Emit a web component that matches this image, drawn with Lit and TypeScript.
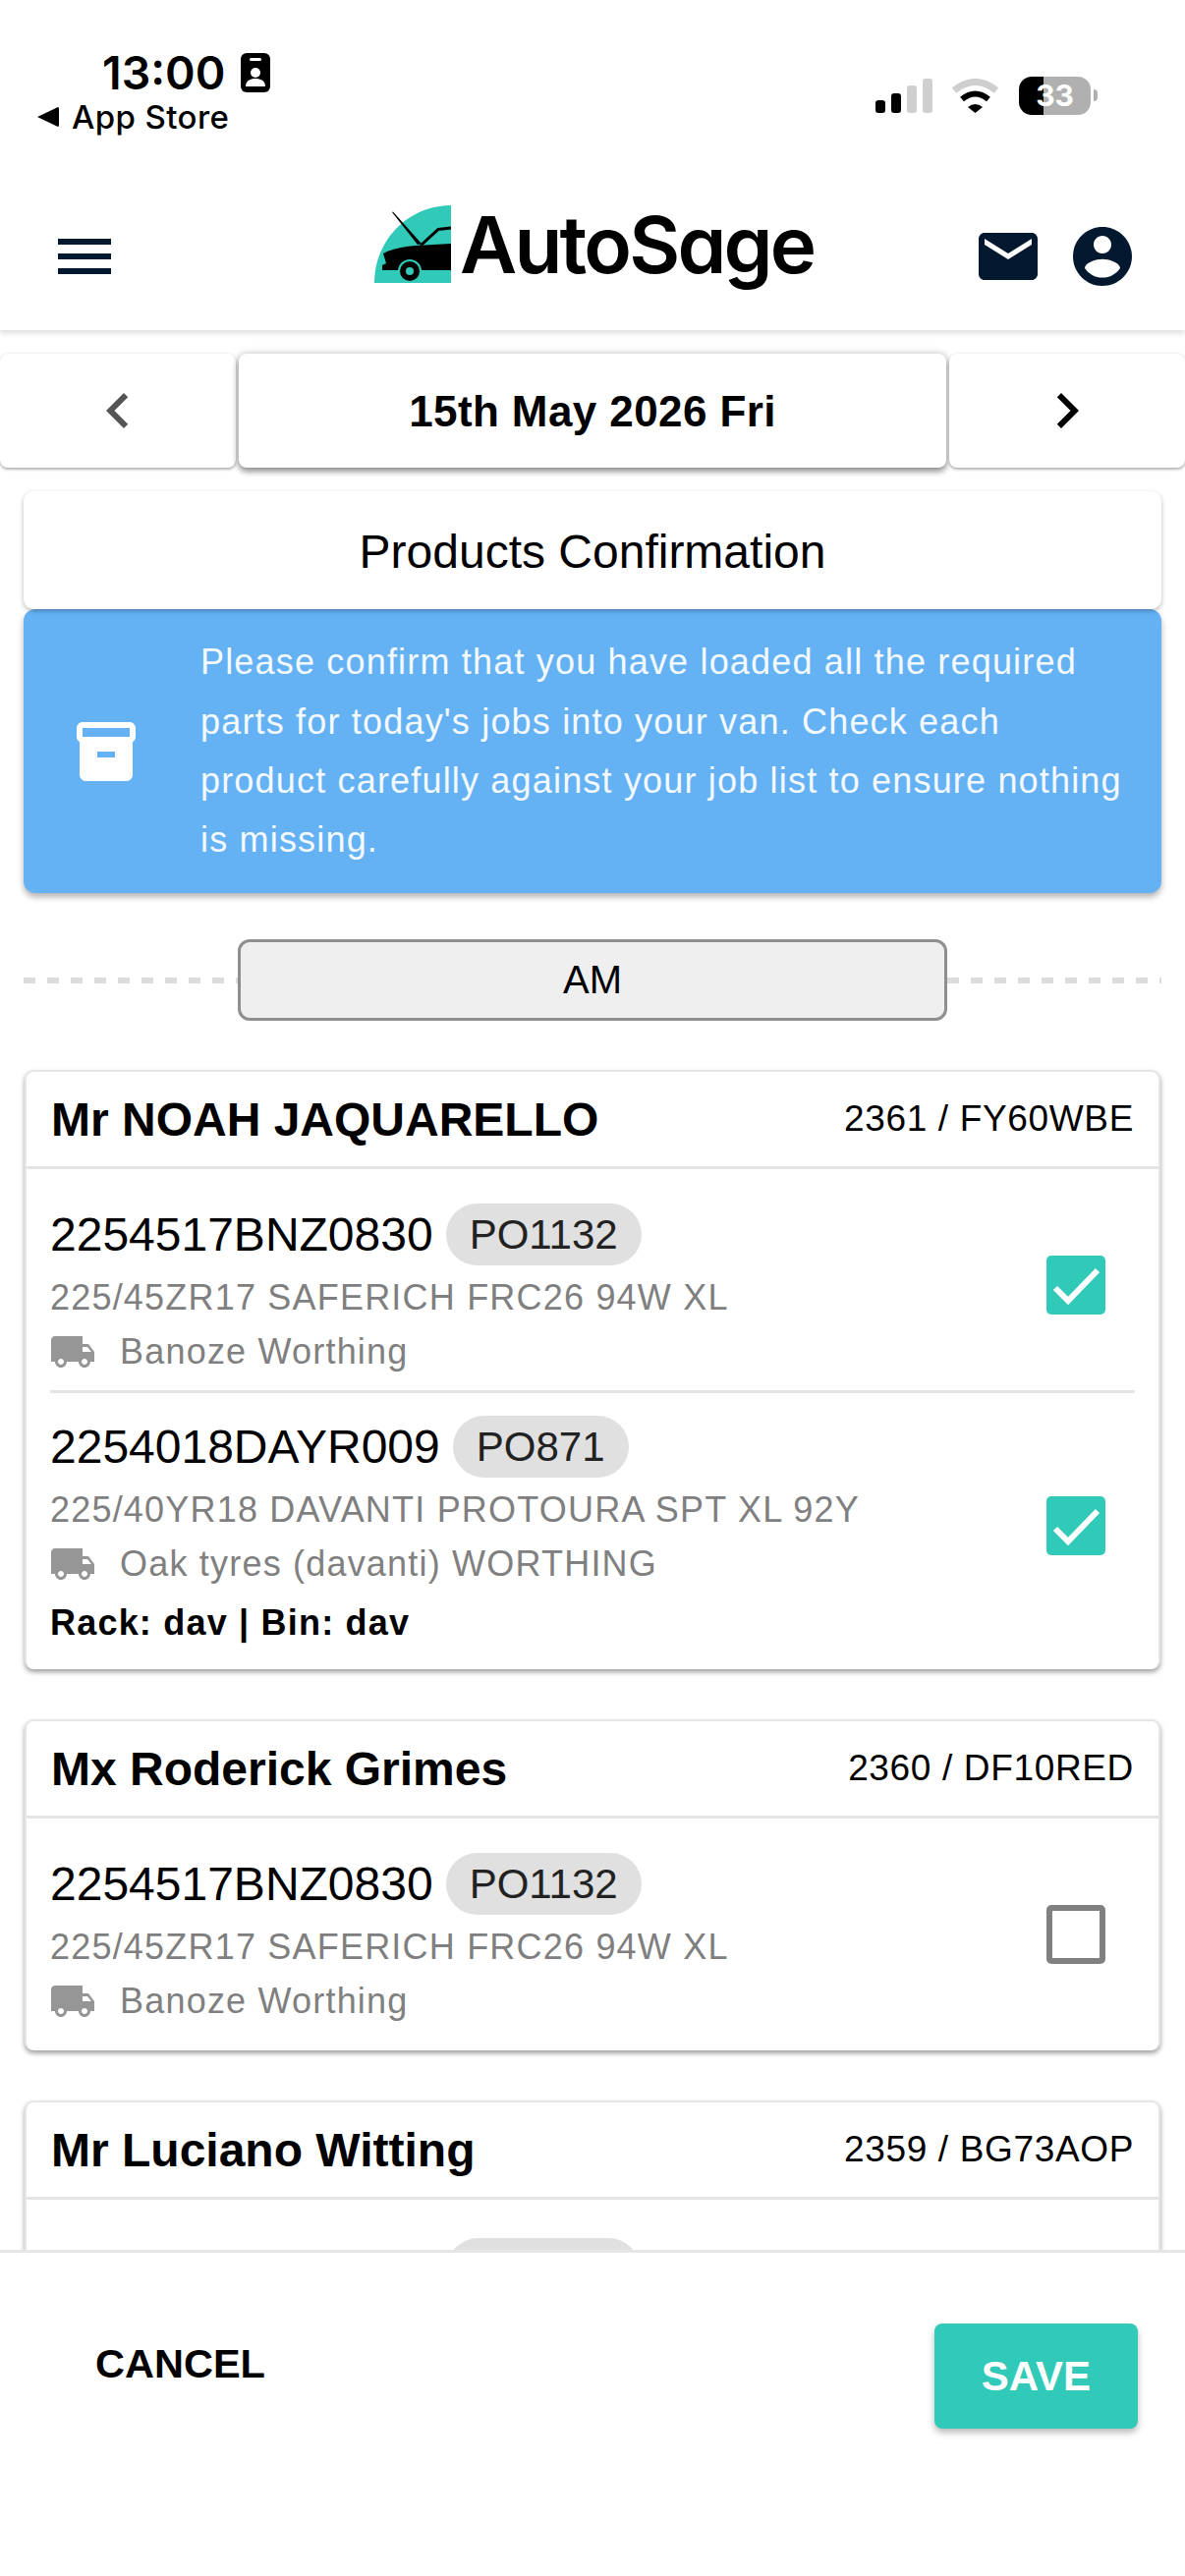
import { LitElement, html, css } from "lit";
import { customElement } from "lit/decorators.js";

const truck = "M20 8h-3V4H3c-1.1 0-2 .9-2 2v11h2c0 1.66 1.34 3 3 3s3-1.34 3-3h6c0 1.66 1.34 3 3 3s3-1.34 3-3h2v-5zM6 18.5c-.83 0-1.5-.67-1.5-1.5s.67-1.5 1.5-1.5 1.5.67 1.5 1.5-.67 1.5-1.5 1.5zm13.5-9l1.96 2.5H17V9.5h2.5zm-1.5 9c-.83 0-1.5-.67-1.5-1.5s.67-1.5 1.5-1.5 1.5.67 1.5 1.5-.67 1.5-1.5 1.5z";

const icon = (d: string, cls: string) => html`<svg class=${cls} viewBox="0 0 24 24"><path d=${d} fill="currentColor"></path></svg>`;

interface Item { part: string; po: string; desc: string; supplier: string; rack?: string; checked: boolean; }
interface Job { name: string; ref: string; items: Item[]; }

const jobs: Job[] = [
  { name: "Mr NOAH JAQUARELLO", ref: "2361 / FY60WBE", items: [
    { part: "2254517BNZ0830", po: "PO1132", desc: "225/45ZR17 SAFERICH FRC26 94W XL", supplier: "Banoze Worthing", checked: true },
    { part: "2254018DAYR009", po: "PO871", desc: "225/40YR18 DAVANTI PROTOURA SPT XL 92Y", supplier: "Oak tyres (davanti) WORTHING", rack: "Rack: dav | Bin: dav", checked: true },
  ]},
  { name: "Mx Roderick Grimes", ref: "2360 / DF10RED", items: [
    { part: "2254517BNZ0830", po: "PO1132", desc: "225/45ZR17 SAFERICH FRC26 94W XL", supplier: "Banoze Worthing", checked: false },
  ]},
  { name: "Mr Luciano Witting", ref: "2359 / BG73AOP", items: [] },
];

@customElement("app-root")
export class AppRoot extends LitElement {
  static styles = css`
    :host { display: block; width: 1206px; height: 2622px; background: #fff; font-family: "Liberation Sans", Arial, sans-serif; color: #000; overflow: hidden; }
    * { box-sizing: border-box; }
    svg { display: block; flex: none; }
    .page { display: flex; flex-direction: column; height: 2622px; }

    .header { height: 336px; flex: none; background: #fff; box-shadow: 0 3px 6px rgba(0,0,0,.14); position: relative; z-index: 2; display: flex; flex-direction: column; }
    .status { height: 186px; display: flex; justify-content: space-between; }
    .status-left { display: flex; flex-direction: column; }
    .time-row { display: flex; align-items: center; gap: 16px; padding: 54px 0 0 104px; height: 94px; }
    .time { font-family: Inter, sans-serif; font-weight: 600; font-size: 46.500px; line-height: 40px; }
    .back-row { display: flex; align-items: center; gap: 13px; padding: 6px 0 0 38px; }
    .back-tri { width: 22px; height: 20px; }
    .back { font-family: Inter, sans-serif; font-weight: 500; font-size: 33px; line-height: 38px; letter-spacing: .4px; }
    .status-right { display: flex; align-items: flex-start; padding: 78px 89px 0 0; }
    .signal { display: flex; align-items: flex-end; gap: 6px; height: 35px; margin-top: 2px; margin-left: 2px; }
    .signal i { display: block; width: 10px; border-radius: 3px; background: #000; }
    .signal i.s1 { height: 13px; }
    .signal i.s2 { height: 20px; }
    .signal i.s3 { height: 28px; background: #cfcfcf; }
    .signal i.s4 { height: 35px; background: #cfcfcf; }
    .wifi { width: 49px; height: 35px; margin: 2px 0 0 19px; }
    .battery { width: 73px; height: 39px; margin-left: 20px; border-radius: 13px; background: linear-gradient(90deg, #000 0 25px, #b0b0b0 25px); color: #fff; font-family: Inter, sans-serif; font-weight: 700; font-size: 30px; line-height: 39px; text-align: center; }
    .nub { width: 4px; height: 12px; margin: 13px 0 0 3px; background: #b0b0b0; border-radius: 0 6px 6px 0; }

    .toolbar { height: 150px; display: flex; align-items: center; padding: 0 48px 0 50px; color: #02182f; }
    .i72 { width: 72px; height: 72px; }
    .logo { display: flex; align-items: flex-start; margin: 0 0 26px 259px; gap: 9px; }
    .logo-mark { width: 78px; height: 79px; }
    .logo-text { font-family: Inter, sans-serif; font-feature-settings: "cv11" 1; font-weight: 600; font-size: 80px; line-height: 79px; letter-spacing: -2.8px; color: #000; }
    .toolbar-right { margin-left: auto; display: flex; gap: 24px; }

    .content { flex: 1; min-height: 0; overflow: hidden; }
    .date-nav { display: grid; grid-template-columns: 240px 1fr 240px; gap: 3px; margin-top: 24px; height: 116px; }
    .date-btn { background: #fff; border-radius: 8px; display: flex; align-items: center; justify-content: center; box-shadow: 0 2px 3px rgba(0,0,0,.28), 0 0 3px rgba(0,0,0,.1); }
    .date-btn.mid { padding-top: 2px; font-weight: 700; font-size: 44px; letter-spacing: .4px; box-shadow: 0 4px 6px rgba(0,0,0,.38), 0 0 8px rgba(0,0,0,.22); }
    .date-btn.prev { color: #555; }
    .title-card { margin: 24px 24px 0; height: 120px; padding-top: 2px; background: #fff; border-radius: 10px; box-shadow: 0 2px 5px rgba(0,0,0,.28); display: flex; align-items: center; justify-content: center; font-size: 48px; position: relative; z-index: 1; }
    .alert { margin: 0 24px; height: 289px; background: #64b2f4; border-radius: 12px; box-shadow: 0 4px 6px rgba(0,0,0,.3); display: flex; align-items: center; color: #fff; }
    .alert-icon { width: 72px; height: 72px; margin-left: 48px; }
    .alert-text { margin: 1px 0 0 60px; font-size: 36px; line-height: 60.3px; letter-spacing: 1.18px; color: #f4f9ff; width: 950px; }

    .section { display: grid; grid-template-columns: 218px 1fr 218px; align-items: center; margin: 47px 24px 0; }
    .dash { height: 6px; background: repeating-linear-gradient(90deg, #dcdcdc 0 12px, transparent 12px 24px); }
    .am { height: 83px; background: #efefef; border: 3px solid #8f8f8f; border-radius: 12px; display: flex; align-items: center; justify-content: center; font-size: 40px; }

    .cards { display: flex; flex-direction: column; gap: 51px; margin: 50px 25px 0; }
    .card { background: #fff; border: 2px solid #e6e6e6; border-bottom: none; border-radius: 9px; box-shadow: 0 3px 5px rgba(0,0,0,.38); }
    .card-head { height: 99px; padding: 0 25px; display: flex; align-items: center; justify-content: space-between; border-bottom: 3px solid #e4e4e4; }
    .name { font-weight: 700; font-size: 48px; }
    .ref { font-size: 37px; letter-spacing: .65px; }
    .row { margin: 0 24px; padding: 35px 0 14px; display: flex; align-items: center; justify-content: space-between; border-bottom: 3px solid #e4e4e4; }
    .row + .row { padding-top: 23px; }
    .row:last-child { border-bottom: none; padding-bottom: 25px; }
    .row-main { display: flex; flex-direction: column; }
    .part-line { display: flex; align-items: center; gap: 13px; height: 63px; }
    .part { font-size: 48px; }
    .pill { height: 63px; padding: 0 24px; border-radius: 32px; background: #e0e0e0; font-size: 42px; color: #222; display: flex; align-items: center; }
    .desc { margin-top: 13px; font-size: 36px; line-height: 40px; letter-spacing: 1.2px; color: #7f7f7f; height: 40px; }
    .supplier { margin-top: 13px; display: flex; align-items: center; gap: 24px; height: 44px; font-size: 36px; letter-spacing: 1.2px; color: #808080; white-space: nowrap; }
    .truck { width: 48px; height: 48px; color: #969696; margin-left: -1px; }
    .rack { margin-top: 16px; font-weight: 700; font-size: 36px; line-height: 44px; letter-spacing: 1.2px; }
    .supplier-end { height: 3px; }
    .check { width: 60px; height: 60px; margin: 0 30px 10px 0; border-radius: 5px; flex: none; }
    .check.on { background: #31c9b8; }
    .check.off { border: 6px solid #808080; }
    .peek { height: 240px; padding: 39px 0 0 428px; }
    .peek-pill { width: 196px; height: 63px; border-radius: 32px; background: #e0e0e0; }

    .footer { height: 332px; flex: none; background: #fff; border-top: 3px solid #e6e6e6; display: flex; align-items: flex-start; justify-content: space-between; padding: 72px 48px 0 97px; position: relative; z-index: 2; }
    .cancel { margin-top: 21px; font-weight: 700; font-size: 41.500px; line-height: 40px; }
    .save { width: 207px; height: 107px; border-radius: 8px; background: #31c9b8; color: #fff; display: flex; align-items: center; justify-content: center; font-weight: 700; font-size: 42px; box-shadow: 0 4px 7px rgba(0,0,0,.28); }
  `;

  private renderItem(it: Item) {
    return html`<div class="row">
      <div class="row-main">
        <div class="part-line"><span class="part">${it.part}</span><span class="pill">${it.po}</span></div>
        <div class="desc">${it.desc}</div>
        <div class="supplier">${icon(truck, "truck")}<span>${it.supplier}</span></div>
        ${it.rack ? html`<div class="rack">${it.rack}</div>` : html`<div class="supplier-end"></div>`}
      </div>
      ${it.checked
        ? html`<div class="check on"><svg viewBox="0 0 60 60" width="60" height="60"><path d="M9 33 L22 46 L52 15" fill="none" stroke="#fff" stroke-width="6"></path></svg></div>`
        : html`<div class="check off"></div>`}
    </div>`;
  }

  render() {
    return html`<div class="page">
      <header class="header">
        <div class="status">
          <div class="status-left">
            <div class="time-row">
              <span class="time">13:00</span>
              <svg width="30" height="40" viewBox="0 0 30 40"><rect width="30" height="40" rx="6" fill="#000"></rect><rect x="9" y="5" width="12" height="3" rx="1.500" fill="#fff"></rect><circle cx="15" cy="20" r="5" fill="#fff"></circle><path d="M5 34c0-6 5-8 10-8s10 2 10 8z" fill="#fff"></path></svg>
            </div>
            <div class="back-row">
              <svg class="back-tri" viewBox="0 0 22 20"><path d="M0 10 L21 0 Q22 0 22 2 V18 Q22 20 21 20 Z" fill="#000"></path></svg>
              <span class="back">App Store</span>
            </div>
          </div>
          <div class="status-right">
            <div class="signal"><i class="s1"></i><i class="s2"></i><i class="s3"></i><i class="s4"></i></div>
            <svg class="wifi" viewBox="0 0 49 35">
              <path d="M3 12 Q24.500 -5 46 12" fill="none" stroke="#cfcfcf" stroke-width="7"></path>
              <path d="M11 21 Q24.500 10 38 21" fill="none" stroke="#000" stroke-width="6"></path>
              <path d="M17 29 Q24.500 23 32 29 L24.500 35 Z" fill="#000"></path>
            </svg>
            <div class="battery">33</div>
            <div class="nub"></div>
          </div>
        </div>
        <div class="toolbar">
          ${icon("M3 18h18v-2H3v2zm0-5h18v-2H3v2zm0-7v2h18V6H3z", "i72")}
          <div class="logo">
            <svg class="logo-mark" viewBox="0 0 78 79">
              <path d="M0 79 C0 35 35 0 78 0 V79 Z" fill="#31c9b8"></path>
              <path d="M9 49 C18 44 30 42 42 41 L78 39 V66 H8 V61 L12 59 Z" fill="#000"></path>
              <path d="M18 7 L19 6.500 L48 39 L44 40 Z" fill="#000"></path>
              <path d="M47 41 L65 24.500 L78 23" fill="none" stroke="#000" stroke-width="3"></path>
              <circle cx="36" cy="67" r="12" fill="#31c9b8"></circle>
              <circle cx="36" cy="67" r="10" fill="#000"></circle>
              <circle cx="36" cy="67" r="4" fill="#31c9b8"></circle>
            </svg>
            <span class="logo-text">AutoSage</span>
          </div>
          <div class="toolbar-right">
            ${icon("M20 4H4c-1.1 0-1.99.9-1.99 2L2 18c0 1.1.9 2 2 2h16c1.1 0 2-.9 2-2V6c0-1.1-.9-2-2-2zm0 4l-8 5-8-5V6l8 5 8-5v2z", "i72")}
            ${icon("M12 2C6.48 2 2 6.48 2 12s4.48 10 10 10 10-4.48 10-10S17.52 2 12 2zm0 3c1.66 0 3 1.34 3 3s-1.34 3-3 3-3-1.34-3-3 1.34-3 3-3zm0 14.2c-2.5 0-4.71-1.28-6-3.22.03-1.99 4-3.08 6-3.08 1.99 0 5.97 1.09 6 3.08-1.29 1.94-3.5 3.22-6 3.22z", "i72")}
          </div>
        </div>
      </header>

      <main class="content">
        <div class="date-nav">
          <div class="date-btn prev">${icon("M15.41 7.41L14 6l-6 6 6 6 1.41-1.41L10.83 12z", "i72")}</div>
          <div class="date-btn mid">15th May 2026 Fri</div>
          <div class="date-btn">${icon("M10 6L8.59 7.41 13.17 12l-4.58 4.59L10 18l6-6z", "i72")}</div>
        </div>
        <div class="title-card">Products Confirmation</div>
        <div class="alert">
          ${icon("M20 2H4c-1 0-2 .9-2 2v3.01c0 .72.43 1.34 1 1.69V20c0 1.1 1.1 2 2 2h14c.9 0 2-.9 2-2V8.7c.57-.35 1-.97 1-1.69V4c0-1.1-1-2-2-2zm-5 12H9v-2h6v2zm5-7H4V4l16-.02V7z", "alert-icon")}
          <p class="alert-text">Please confirm that you have loaded all the required parts for today's jobs into your van. Check each product carefully against your job list to ensure nothing is missing.</p>
        </div>
        <div class="section"><div class="dash"></div><div class="am">AM</div><div class="dash"></div></div>
        <div class="cards">
          ${jobs.map(j => html`<section class="card">
            <div class="card-head"><span class="name">${j.name}</span><span class="ref">${j.ref}</span></div>
            ${j.items.length
              ? j.items.map(it => this.renderItem(it))
              : html`<div class="peek"><div class="peek-pill"></div></div>`}
          </section>`)}
        </div>
      </main>

      <footer class="footer">
        <div class="cancel">CANCEL</div>
        <div class="save">SAVE</div>
      </footer>
    </div>`;
  }
}
